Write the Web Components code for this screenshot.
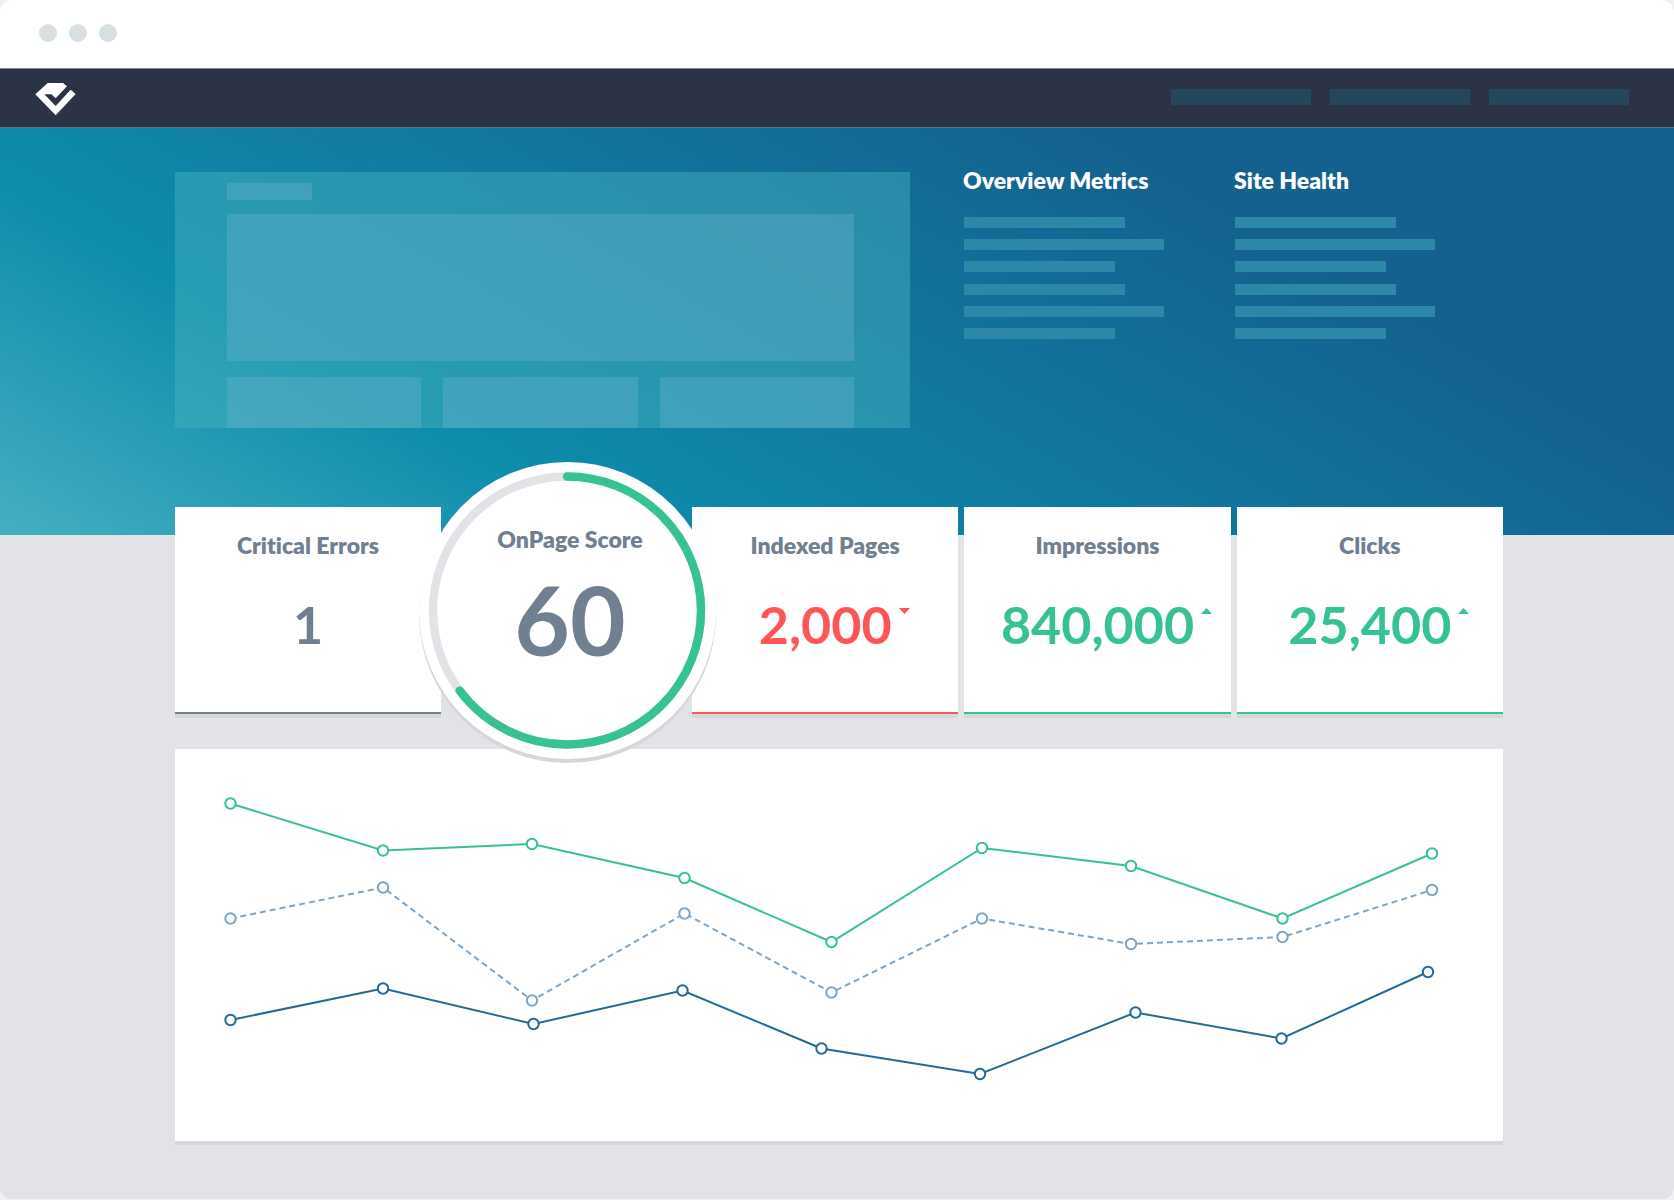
<!DOCTYPE html>
<html lang="en">
<head>
<meta charset="utf-8">
<title>Site dashboard</title>
<style>
  body {
    margin: 0;
    background: #eff1f4;
    font-family: Lato, "Open Sans", sans-serif;
    font-variant-ligatures: none;
    --green: #36c291;
    --red: #ff5555;
    --slate: #708090;
    --edge: #d6d7d8;
    --gutter-left: 175px;
    --gutter-right: 171px;
  }
</style>
</head>
<body>
<app-window>
  <nav-bar></nav-bar>
  <hero-banner>
    <site-preview></site-preview>
    <metric-list label="Overview Metrics"></metric-list>
    <metric-list label="Site Health"></metric-list>
  </hero-banner>
  <stat-row>
    <stat-card slot="first" label="Critical Errors" value="1"></stat-card>
    <score-dial slot="score" label="OnPage Score" value="60"></score-dial>
    <stat-card label="Indexed Pages" value="2,000" trend="down"></stat-card>
    <stat-card label="Impressions" value="840,000" trend="up"></stat-card>
    <stat-card label="Clicks" value="25,400" trend="up"></stat-card>
  </stat-row>
  <trend-chart></trend-chart>
</app-window>

<script>
class Base extends HTMLElement {
  connectedCallback() {
    if (this.shadowRoot) return;
    this.attachShadow({ mode: "open" }).innerHTML = this.render();
  }
}

customElements.define("app-window", class extends Base {
  render() {
    return `
    <style>
      :host { display: block; box-sizing: border-box; min-height: calc(100vh - 1px); margin-bottom: 1px;
        border-radius: 12px; overflow: hidden; background: #e2e3e7; }
      header { display: flex; align-items: center; gap: 12px; height: 66px; padding: 0 39px 2px; background: #fff; }
      header i { width: 18px; height: 18px; border-radius: 50%; background: #d9e0e3; }
      main { padding-bottom: 58px; }
    </style>
    <header><i></i><i></i><i></i></header>
    <main><slot></slot></main>`;
  }
});

customElements.define("nav-bar", class extends Base {
  render() {
    return `
    <style>
      :host { display: block; background: #2d3346; border-top: 1px solid #83868f; border-bottom: 1px solid #4f7890; }
      nav { display: flex; align-items: center; justify-content: space-between; height: 58px; padding: 0 45px 0 35px; }
      svg { display: block; width: 41px; height: 34px; }
      .links { display: flex; gap: 19px; }
      .links i { width: 140px; height: 16px; margin-bottom: 2px; background: #24475b; }
    </style>
    <nav>
      <svg viewBox="105 245 123 102" aria-hidden="true" overflow="visible">
        <path fill="#fff" d="M106 285 143 251H189L201 261 167 297 154 285H133L167 320 212 271 227 284 167 348Z"/>
      </svg>
      <div class="links"><i></i><i></i><i></i></div>
    </nav>`;
  }
});

customElements.define("hero-banner", class extends Base {
  render() {
    return `
    <style>
      :host { display: grid; grid-template-columns: 788fr 271fr 269fr; align-items: start;
        padding: 40px var(--gutter-right) 107px var(--gutter-left);
        background: linear-gradient(30deg, #45afc1 0%, #0e8cab 26%, #14608f 76%); }
      ::slotted(site-preview) { margin: 4px 53px 0 0; }
    </style>
    <slot></slot>`;
  }
});

customElements.define("site-preview", class extends Base {
  render() {
    return `
    <style>
      :host { display: flex; flex-direction: column; box-sizing: border-box; height: 256px; padding: 11px 56px 0 52px;
        background: rgba(72, 180, 190, .45); }
      i { background: rgba(115, 180, 205, .33); }
      .tag { width: 85px; height: 17px; }
      .hero { height: 147px; margin: 14px 0 16px; }
      .row { flex: 1; display: flex; gap: 22px; }
      .row i { flex: 1; }
    </style>
    <i class="tag"></i>
    <i class="hero"></i>
    <div class="row"><i></i><i></i><i></i></div>`;
  }
});

customElements.define("metric-list", class extends Base {
  render() {
    return `
    <style>
      :host { display: block; }
      h2 { margin: 0 0 25px; font-size: 23px; line-height: 24px; font-weight: 800; color: #fff; white-space: nowrap; }
      div { display: flex; flex-direction: column; justify-content: space-between; height: 122px; padding-left: 1px; }
      i { height: 11px; background: #2d87a8; }
      i:nth-child(3n+1) { width: 161px; }
      i:nth-child(3n+2) { width: 200px; }
      i:nth-child(3n) { width: 151px; }
    </style>
    <h2>${this.getAttribute("label")}</h2>
    <div><i></i><i></i><i></i><i></i><i></i><i></i></div>`;
  }
});

customElements.define("stat-row", class extends Base {
  render() {
    return `
    <style>
      :host { display: flex; position: relative; z-index: 1; margin-top: -28px;
        padding: 0 var(--gutter-right) 0 var(--gutter-left); }
      .first { flex: 266 1 0; }
      .score { flex: 251 1 0; }
      .rest { flex: 811 1 0; display: flex; gap: 6px; }
      .rest ::slotted(*) { flex: 1 1 0; }
    </style>
    <div class="first"><slot name="first"></slot></div>
    <div class="score"><slot name="score"></slot></div>
    <div class="rest"><slot></slot></div>`;
  }
});

customElements.define("stat-card", class extends Base {
  render() {
    const trend = this.getAttribute("trend");
    const tone = { up: "var(--green)", down: "var(--red)" }[trend] || "var(--slate)";
    const arrow = trend
      ? `<svg viewBox="0 0 11 6" aria-hidden="true"><path fill="currentColor" d="${trend === "up" ? "M0 6 5.500 0 11 6Z" : "M0 0H11L5.500 6Z"}"/></svg>`
      : "";
    return `
    <style>
      :host { display: block; box-sizing: border-box; height: 207px; padding-top: 26px; text-align: center;
        background: #fff; border-bottom: 2px solid ${tone}; box-shadow: 0 4px 0 var(--edge); }
      h3 { margin: 0 0 41px; font-size: 23px; line-height: 24px; font-weight: 800; color: var(--slate); }
      p { position: relative; display: inline-block; margin: 0; font-size: 52px; line-height: 52px; font-weight: 700; color: ${tone}; }
      svg { position: absolute; left: 100%; top: 10px; width: 11px; height: 6px; margin-left: 7px; }
    </style>
    <h3>${this.getAttribute("label")}</h3>
    <p>${this.getAttribute("value")}${arrow}</p>`;
  }
});

customElements.define("score-dial", class extends Base {
  render() {
    return `
    <style>
      :host { display: block; position: relative; }
      .dial { position: absolute; top: -45px; left: 50%; margin-left: -148px; box-sizing: border-box; width: 297px; height: 297px;
        padding: 65px 0 0 6px; border-radius: 50%; background: #fff; box-shadow: 0 4px 0 var(--edge); text-align: center;
        color: var(--slate); z-index: 1; }
      svg { position: absolute; left: 0; top: 0; width: 100%; height: 100%; }
      h3 { margin: 0 0 20px; font-size: 23px; line-height: 24px; font-weight: 800; }
      p { margin: 0; font-size: 96px; line-height: 96px; font-weight: 700; }
    </style>
    <div class="dial">
      <svg viewBox="0 0 297 297" fill="none" stroke-width="8.400" aria-hidden="true">
        <circle cx="148" cy="148.500" r="134" stroke="#e2e3e7"/>
        <circle cx="148" cy="148.500" r="134" stroke="#36c291" stroke-linecap="round" pathLength="1000"
          stroke-dasharray="648 1000" transform="rotate(-90 148 148.500)"/>
      </svg>
      <h3>${this.getAttribute("label")}</h3>
      <p>${this.getAttribute("value")}</p>
    </div>`;
  }
});

customElements.define("trend-chart", class extends Base {
  render() {
    const series = [
      { color: "#36c291", pts: [[230.5,803.5],[383,850.5],[532,844],[684.5,878],[831.5,942],[982,848],[1131,866],[1282.5,918.5],[1432,853.5]] },
      { color: "#7ea6c4", dash: "6 4", pts: [[230.5,918.5],[383,887.5],[532,1000.5],[684.5,913.5],[831.5,992.5],[982,918.5],[1131,944],[1282.5,937],[1432,890]] },
      { color: "#216a9a", pts: [[230.5,1020],[383,988.5],[533.5,1024],[682.5,990.5],[821.5,1048.5],[980,1074],[1135.5,1012.5],[1281.5,1038.5],[1428,972]] }
    ];
    return `
    <style>
      :host { display: block; margin: 35px var(--gutter-right) 0 var(--gutter-left); background: #fff; box-shadow: 0 4px 0 var(--edge); }
      svg { display: block; width: 100%; }
    </style>
    <svg viewBox="175 749 1328 392" fill="none" stroke-width="2" role="img" aria-label="Trend lines">
      ${series.map(s => `<g stroke="${s.color}"><polyline points="${s.pts.join(" ")}"${s.dash ? ` stroke-dasharray="${s.dash}"` : ""}/>
        ${s.pts.map(([x, y]) => `<circle cx="${x}" cy="${y}" r="5.200" fill="#fff"/>`).join("")}</g>`).join("")}
    </svg>`;
  }
});
</script>
</body>
</html>
